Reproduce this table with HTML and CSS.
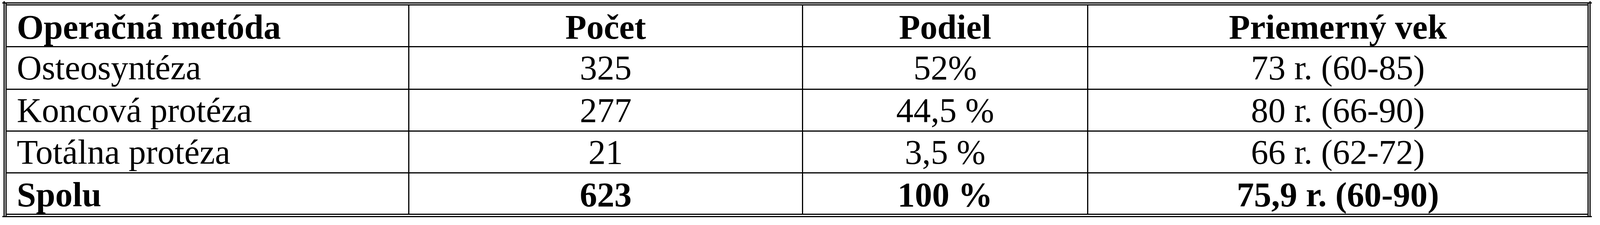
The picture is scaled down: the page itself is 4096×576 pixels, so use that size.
FILE: index.html
```html
<!DOCTYPE html>
<html lang="sk">
<head>
<meta charset="utf-8">
<title>Operačná metóda</title>
<link rel="stylesheet" href="styles.css">
</head>
<body>
<div class="frame">
  <div class="grid">
    <div class="cell first head">Operačná metóda</div>
    <div class="cell head">Počet</div>
    <div class="cell head">Podiel</div>
    <div class="cell head">Priemerný vek</div>

    <div class="cell first row">Osteosyntéza</div>
    <div class="cell row">325</div>
    <div class="cell row">52%</div>
    <div class="cell row">73 r. (60-85)</div>

    <div class="cell first row">Koncová protéza</div>
    <div class="cell row">277</div>
    <div class="cell row">44,5 %</div>
    <div class="cell row">80 r. (66-90)</div>

    <div class="cell first row">Totálna protéza</div>
    <div class="cell row">21</div>
    <div class="cell row">3,5 %</div>
    <div class="cell row">66 r. (62-72)</div>

    <div class="cell first total">Spolu</div>
    <div class="cell total">623</div>
    <div class="cell total">100 %</div>
    <div class="cell total">75,9 r. (60-90)</div>
  </div>
</div>
</body>
</html>
```

FILE: styles.css
```css
html, body {
  margin: 0;
  padding: 0;
  background: #fff;
}

body {
  font-family: "Liberation Serif", "Times New Roman", serif;
  color: #000;
}

.frame {
  position: relative;
  width: fit-content;
  margin: 6px 0 0 9px;
  padding: 5px 5px 6px 5px;
}

.frame::before {
  content: "";
  position: absolute;
  left: -3px;
  right: -3px;
  top: 0;
  bottom: 0;
  border-top: 3px solid #000;
  border-bottom: 3px solid #000;
}

.frame::after {
  content: "";
  position: absolute;
  left: 0;
  right: 0;
  top: -3px;
  bottom: -3px;
  border-left: 3px solid #000;
  border-right: 3px solid #000;
}

.grid {
  position: relative;
  display: grid;
  grid-template-columns: 1028px 1005px 727px 1278px;
  grid-template-rows: 104px 106px 104px 104px 103px;
  gap: 3px;
  padding: 3px;
  background: #000;
}

.grid::after {
  content: "";
  position: absolute;
  left: 0;
  right: 0;
  top: -3px;
  bottom: -3px;
  border-left: 3px solid #000;
  border-right: 3px solid #000;
  pointer-events: none;
}

.cell {
  background: #fff;
  font-size: 88.5px;
  line-height: normal;
  text-align: center;
  white-space: nowrap;
  padding: 1px 26px 0 26px;
}

.cell.first {
  text-align: left;
}

.head {
  font-weight: bold;
  padding-top: 4px;
}

.row {
  font-weight: normal;
  padding-top: 1px;
}

.total {
  font-weight: bold;
  padding-top: 3px;
}
```
